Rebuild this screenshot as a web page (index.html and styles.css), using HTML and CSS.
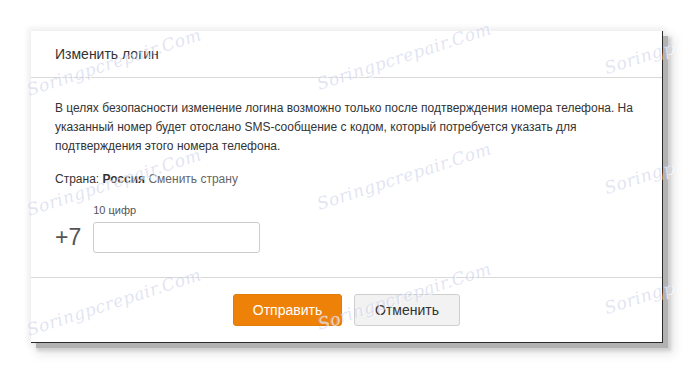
FILE: index.html
```html
<!DOCTYPE html>
<html lang="ru">
<head>
<meta charset="utf-8">
<title>Изменить логин</title>
<link rel="stylesheet" href="styles.css">
</head>
<body>
<div class="stage">
  <div class="dialog">
    <div class="dlg-head">Изменить логин</div>
    <div class="dlg-body">
      <p class="info">В целях безопасности изменение логина возможно только после подтверждения номера телефона. На указанный номер будет отослано SMS-сообщение с кодом, который потребуется указать для подтверждения этого номера телефона.</p>
      <div class="country">Страна: <b>Россия</b> <span class="change">Сменить страну</span></div>
      <div class="phone-row">
        <div class="prefix">+7</div>
        <div class="field">
          <div class="hint">10 цифр</div>
          <input class="phone-input" type="text">
        </div>
      </div>
    </div>
    <div class="dlg-foot">
      <button class="btn btn-primary">Отправить</button>
      <button class="btn btn-secondary">Отменить</button>
    </div>
  </div>
  <div class="watermarks">
    <span class="wm" style="left:114px;top:62px">Soringpcrepair.Com</span>
    <span class="wm" style="left:404px;top:56px">Soringpcrepair.Com</span>
    <span class="wm wm-edge" style="left:608px;top:78px">Soringp</span>
    <span class="wm" style="left:114px;top:182px">Soringpcrepair.Com</span>
    <span class="wm" style="left:404px;top:176px">Soringpcrepair.Com</span>
    <span class="wm wm-edge" style="left:608px;top:198px">Soringp</span>
    <span class="wm" style="left:114px;top:302px">Soringpcrepair.Com</span>
    <span class="wm" style="left:404px;top:296px">Soringpcrepair.Com</span>
    <span class="wm wm-edge" style="left:608px;top:318px">Soringp</span>
  </div>
</div>
</body>
</html>
```
FILE: styles.css
```css
html, body {
  margin: 0;
  padding: 0;
  background: #ffffff;
}
body {
  width: 696px;
  height: 375px;
  overflow: hidden;
  font-family: "Liberation Sans", Arial, sans-serif;
  color: #333333;
}
.stage {
  position: relative;
  width: 696px;
  height: 375px;
  padding: 31px 0 0 31px;
  box-sizing: border-box;
}
.dialog {
  width: 632px;
  box-sizing: border-box;
  background: #ffffff;
  border-right: 1px solid #2a2a2a;
  border-bottom: 1px solid #2a2a2a;
  box-shadow:
    5px 5px 0 0 #b2b2b2,
    7px 7px 3px 1px #cfcfcf,
    8px 8px 10px 3px #e6e6e6,
    0 0 6px 3px #efefef;
}
.dlg-head {
  height: 46px;
  line-height: 46px;
  padding-left: 24px;
  font-size: 14px;
  color: #333333;
  border-bottom: 1px solid #d9d9d9;
}
.dlg-body {
  padding: 21px 24px 24px 24px;
  font-size: 12px;
  line-height: 19px;
}
.info {
  margin: 0 0 14px 0;
}
.country b {
  font-weight: bold;
  color: #333333;
}
.change {
  color: #666666;
}
.phone-row {
  display: flex;
  align-items: flex-end;
  margin-top: 14px;
  gap: 12px;
}
.prefix {
  height: 31px;
  line-height: 31px;
  font-size: 23px;
  color: #555555;
}
.field {
  display: flex;
  flex-direction: column;
}
.hint {
  font-size: 11px;
  line-height: 14px;
  color: #555555;
  margin-bottom: 5px;
}
.phone-input {
  width: 167px;
  height: 31px;
  box-sizing: border-box;
  border: 1px solid #cccccc;
  border-radius: 3px;
  margin: 0;
  padding: 0 8px;
  outline: none;
  background: #ffffff;
}
.dlg-foot {
  border-top: 1px solid #d9d9d9;
  padding: 16px 0;
  display: flex;
  justify-content: center;
  gap: 12px;
}
.btn {
  height: 32px;
  box-sizing: border-box;
  border-radius: 3px;
  font-family: "Liberation Sans", Arial, sans-serif;
  font-size: 14px;
  padding: 0;
  margin: 0;
  cursor: pointer;
}
.btn-primary {
  width: 109px;
  background: #ee8208;
  border: 1px solid #e27b07;
  color: #ffffff;
}
.btn-secondary {
  width: 106px;
  background: #f2f2f2;
  border: 1px solid #cfcfcf;
  color: #333333;
}
.watermarks {
  position: absolute;
  left: 0;
  top: 0;
  width: 696px;
  height: 375px;
  overflow: hidden;
  pointer-events: none;
}
.wm {
  position: absolute;
  transform: translate(-50%, -50%) rotate(-18deg);
  white-space: nowrap;
  font-family: "DejaVu Serif", serif;
  font-style: italic;
  font-weight: normal;
  font-size: 17px;
  letter-spacing: 0.5px;
  color: rgba(185, 190, 225, 0.42);
  text-shadow: 1px 1px 0 rgba(255, 255, 255, 0.7);
}
.wm-edge {
  transform-origin: 0 100%;
  transform: translate(0, -100%) rotate(-18deg);
}
```
